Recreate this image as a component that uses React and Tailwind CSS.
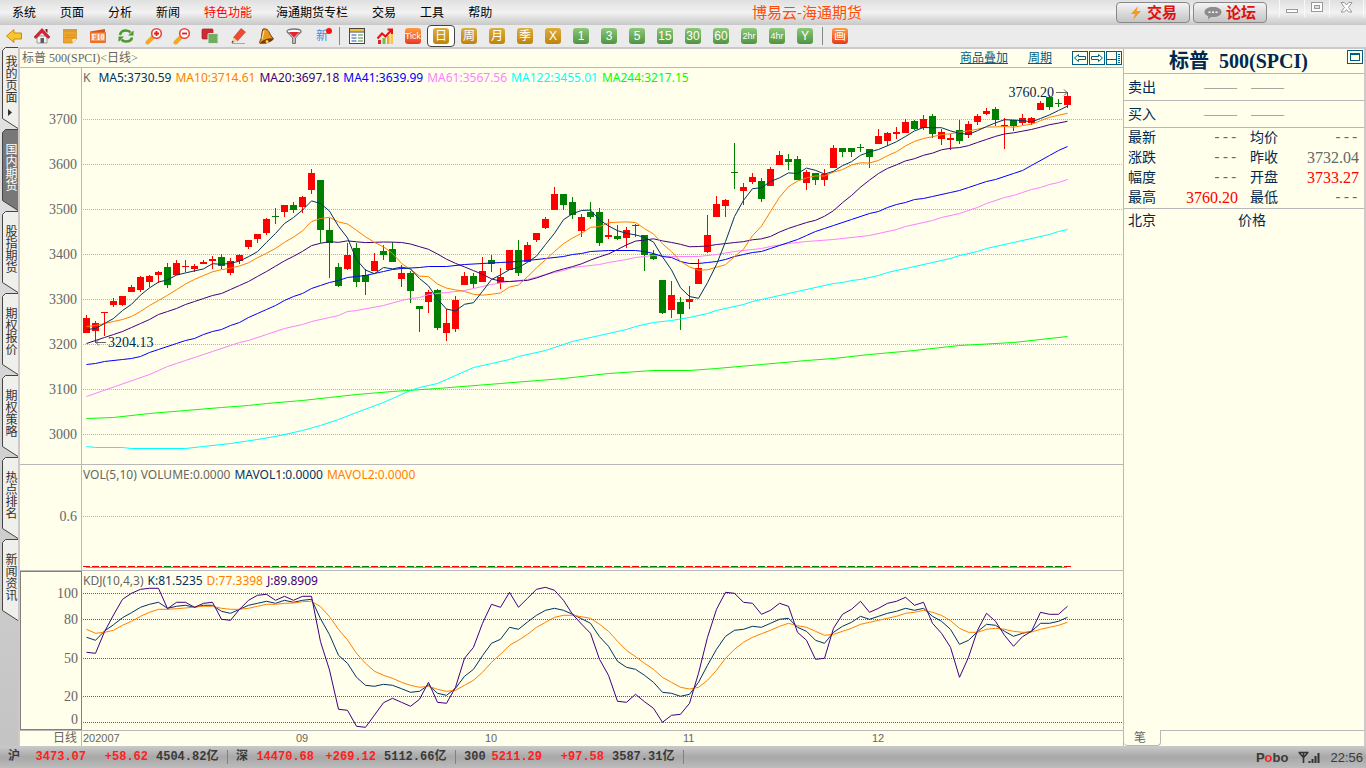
import React, { useState } from 'react';

const SONG = "font-['Liberation_Serif','Noto_Sans_CJK_SC',serif]";
const HEI = "font-['Liberation_Sans','Noto_Sans_CJK_SC',sans-serif]";
const MONO = "font-['Liberation_Mono','Noto_Sans_CJK_SC',monospace]";

const RED = '#ff0000';
const GREEN = '#008000';

const MENUS = ['系统', '页面', '分析', '新闻', '特色功能', '海通期货专栏', '交易', '工具', '帮助'];
const TABS = ['我的页面', '国内期货', '股指期货', '期权报价', '期权策略', '热点排名', '新闻资讯'];

// [high, body top, body bottom, low, up?]
const CANDLES = [
  [315, 318, 333, 333, 1], [321, 323, 331, 343, 1], [312, 312, 313, 336, 1], [298, 301, 305, 307, 1],
  [296, 296, 305, 306, 1], [285, 287, 292, 292, 1], [276, 277, 290, 292, 1], [275, 276, 282, 287, 1],
  [271, 272, 275, 283, 1], [263, 267, 285, 288, 0], [260, 263, 275, 275, 1], [260, 266, 267, 272, 1],
  [264, 266, 269, 272, 1], [260, 262, 264, 264, 1], [256, 259, 261, 269, 1], [254, 257, 266, 269, 0],
  [258, 261, 273, 275, 1], [254, 255, 261, 264, 1], [240, 240, 247, 249, 1], [234, 234, 239, 243, 1],
  [218, 219, 233, 235, 1], [208, 216, 217, 224, 0], [205, 205, 212, 217, 1], [202, 205, 210, 213, 0],
  [196, 197, 207, 213, 1], [169, 173, 190, 194, 1], [180, 180, 230, 243, 0], [218, 230, 243, 278, 0],
  [263, 267, 286, 287, 0], [243, 255, 269, 270, 1], [243, 248, 282, 287, 0], [269, 275, 282, 295, 0],
  [253, 261, 271, 271, 1], [245, 251, 255, 260, 0], [242, 249, 262, 262, 0], [265, 273, 279, 287, 1],
  [271, 273, 291, 303, 0], [306, 306, 309, 332, 0], [290, 292, 302, 313, 1], [289, 290, 328, 330, 0],
  [309, 323, 333, 341, 1], [296, 300, 329, 332, 1], [272, 276, 285, 285, 1], [273, 276, 284, 288, 0],
  [257, 271, 282, 282, 1], [255, 260, 264, 272, 0], [268, 277, 283, 289, 1], [250, 250, 270, 270, 1],
  [240, 250, 273, 276, 0], [242, 245, 262, 262, 1], [233, 233, 240, 242, 1], [217, 219, 228, 229, 1],
  [187, 194, 210, 210, 1], [194, 194, 205, 210, 0], [197, 202, 215, 219, 0], [214, 217, 231, 237, 1],
  [202, 212, 217, 219, 0], [208, 212, 243, 246, 0], [219, 235, 237, 239, 1], [225, 236, 239, 240, 0],
  [227, 230, 238, 248, 1], [224, 225, 226, 237, 1], [235, 235, 255, 271, 0], [250, 254, 259, 260, 0],
  [280, 280, 313, 314, 0], [281, 295, 310, 318, 1], [297, 302, 314, 330, 0], [286, 299, 302, 309, 1],
  [259, 268, 284, 284, 1], [215, 235, 252, 253, 1], [196, 204, 217, 217, 1], [199, 200, 206, 217, 1],
  [143, 172, 173, 189, 0], [183, 187, 191, 205, 1], [173, 177, 182, 184, 1], [178, 181, 199, 202, 0],
  [167, 169, 186, 186, 1], [151, 155, 165, 165, 1], [154, 159, 162, 170, 0], [156, 159, 180, 180, 0],
  [170, 172, 183, 190, 1], [173, 173, 180, 185, 0], [169, 174, 180, 186, 1], [145, 148, 168, 168, 1],
  [148, 148, 152, 157, 0], [148, 148, 152, 157, 0], [144, 147, 148, 152, 0], [149, 149, 157, 168, 0],
  [129, 136, 144, 144, 1], [132, 133, 141, 146, 1], [127, 132, 134, 139, 1], [119, 122, 133, 133, 1],
  [120, 121, 129, 130, 0], [115, 119, 128, 130, 1], [114, 116, 134, 138, 0], [129, 132, 139, 145, 1],
  [134, 138, 140, 150, 1], [120, 130, 141, 144, 0], [121, 124, 135, 138, 1], [114, 116, 122, 125, 1],
  [108, 111, 114, 115, 1], [107, 109, 120, 126, 0], [118, 125, 126, 149, 1], [120, 120, 126, 131, 0],
  [114, 118, 123, 125, 1], [117, 118, 123, 125, 1], [101, 103, 110, 110, 1], [95, 97, 107, 110, 0],
  [99, 103, 104, 107, 0], [92, 96, 105, 108, 1],
];

// values before the window is full
const MA5_HEAD = [329, 328, 323, 318];
const MA10_HEAD = [326, 325, 323, 321, 319, 316, 311, 305, 300];
const MA20_HEAD = [343, 340, 337, 334, 331, 327, 323, 319, 314, 311, 308, 304, 301, 298, 295, 293, 289, 285, 281];

// long averages: [bar, y]
const MA41 = [
  [0, 364], [1, 363], [2, 361], [4, 359], [5, 358], [6, 356], [7, 352], [8, 349], [10, 343], [11, 340], [12, 338],
  [13, 334], [14, 331], [15, 329], [16, 325], [17, 322], [18, 317], [19, 313], [20, 309], [21, 305], [22, 300],
  [23, 296], [24, 293], [25, 288], [26, 285], [27, 282], [28, 280], [29, 277], [30, 276], [31, 275], [32, 273],
  [33, 271], [34, 269], [35, 268], [37, 267], [38, 266], [40, 266], [42, 264], [44, 263], [46, 262], [48, 261],
  [49, 260], [51, 258], [53, 256], [54, 254], [55, 253], [56, 251], [58, 250], [61, 250], [62, 251], [63, 253],
  [64, 256], [65, 257], [66, 261], [67, 263], [68, 263], [69, 262], [70, 261], [71, 259], [72, 256], [73, 254],
  [74, 252], [75, 251], [76, 248], [77, 245], [78, 242], [79, 239], [80, 235], [81, 231], [82, 228], [83, 225],
  [85, 219], [87, 213], [88, 211], [89, 207], [90, 204], [91, 202], [92, 199], [93, 198], [94, 196], [96, 192],
  [97, 190], [98, 187], [99, 184], [100, 181], [101, 179], [103, 173], [104, 170], [105, 165], [107, 155],
  [108, 150], [109, 146],
];
const MA61 = [
  [0, 396], [7, 374], [8, 370], [9, 366], [10, 363], [11, 360], [12, 357], [13, 354], [14, 351], [16, 345], [17, 342],
  [18, 340], [20, 334], [22, 328], [24, 324], [25, 321], [27, 317], [28, 315], [29, 311], [30, 310], [33, 305],
  [35, 300], [36, 298], [37, 297], [38, 294], [40, 292], [42, 290], [43, 288], [45, 284], [47, 281], [49, 279],
  [51, 274], [52, 272], [53, 270], [54, 267], [55, 266], [57, 264], [58, 262], [60, 259], [61, 257], [63, 255],
  [65, 256], [68, 256], [70, 254], [72, 251], [74, 249], [75, 248], [76, 246], [78, 243], [80, 241], [83, 239],
  [87, 235], [90, 229], [91, 226], [94, 220], [95, 217], [97, 213], [98, 210], [99, 207], [100, 203], [102, 197],
  [103, 195], [104, 192], [105, 189], [106, 187], [107, 184], [108, 182], [109, 179],
];
const MA122 = [
  [0, 446], [1, 447], [4, 447], [5, 448], [11, 448], [13, 446], [16, 443], [19, 439], [21, 436], [24, 430], [26, 425],
  [28, 419], [30, 412], [33, 402], [34, 398], [36, 390], [37, 387], [39, 383], [40, 379], [41, 375], [43, 367],
  [45, 363], [47, 359], [48, 356], [51, 350], [52, 347], [54, 341], [57, 335], [60, 329], [61, 326], [63, 322],
  [65, 320], [67, 317], [69, 313], [70, 310], [73, 304], [74, 301], [75, 299], [79, 291], [83, 283], [84, 282],
  [85, 280], [86, 279], [88, 275], [89, 272], [96, 258], [97, 255], [99, 251], [100, 248], [103, 242], [107, 234],
  [108, 231], [109, 229],
];
const MA244 = [
  [0, 418], [3, 417], [7, 413], [11, 410], [15, 407], [18, 405], [20, 403], [24, 400], [27, 397], [30, 394], [34, 391],
  [39, 388], [46, 383], [53, 378], [58, 373], [63, 370], [67, 370], [70, 368], [75, 364], [80, 360], [83, 358],
  [87, 354], [92, 350], [97, 345], [103, 342], [109, 336],
];

// oscillator samples, three units to the pixel
const KDJ_K = [
  232, 241, 213, 194, 173, 158, 142, 133, 127, 145, 139, 136, 142, 136, 136, 154, 160, 148, 136, 130, 124, 130, 121,
  127, 121, 118, 176, 224, 286, 310, 352, 376, 379, 373, 376, 386, 397, 394, 375, 400, 406, 385, 349, 328, 287, 250,
  238, 202, 208, 186, 166, 151, 145, 151, 163, 176, 190, 230, 259, 304, 322, 328, 346, 367, 397, 400, 409, 403, 367,
  316, 268, 229, 211, 208, 199, 202, 190, 178, 175, 202, 214, 241, 250, 217, 199, 187, 169, 178, 169, 160, 154, 145,
  151, 145, 169, 184, 208, 253, 241, 215, 193, 196, 214, 229, 220, 214, 190, 190, 184, 172,
];
const KDJ_D = [
  208, 220, 217, 211, 196, 184, 169, 157, 148, 148, 146, 144, 141, 139, 139, 145, 148, 148, 145, 139, 133, 133, 130,
  129, 125, 124, 140, 170, 208, 240, 280, 310, 334, 346, 355, 367, 376, 382, 379, 388, 394, 391, 376, 361, 337, 307,
  283, 256, 241, 223, 202, 187, 172, 166, 166, 170, 175, 193, 214, 244, 271, 290, 310, 328, 352, 367, 382, 387, 382,
  361, 331, 295, 268, 247, 232, 221, 211, 199, 190, 197, 202, 214, 226, 223, 214, 205, 193, 187, 181, 175, 169, 160,
  157, 151, 157, 166, 182, 205, 217, 217, 208, 205, 208, 214, 217, 216, 208, 202, 196, 187,
];
const KDJ_J = [
  277, 280, 215, 165, 118, 100, 88, 85, 85, 146, 127, 127, 142, 130, 127, 178, 181, 148, 121, 106, 103, 121, 109, 121,
  109, 109, 245, 330, 448, 451, 499, 502, 465, 428, 415, 427, 439, 418, 367, 427, 430, 382, 295, 262, 190, 133, 142,
  97, 142, 115, 88, 82, 91, 121, 163, 192, 220, 298, 346, 424, 427, 403, 425, 445, 487, 466, 463, 430, 340, 232, 148,
  97, 100, 127, 130, 163, 151, 130, 139, 217, 241, 298, 295, 205, 163, 148, 124, 157, 145, 130, 124, 112, 136, 127,
  190, 220, 262, 352, 292, 211, 160, 184, 226, 259, 230, 214, 157, 163, 163, 139,
];

const PRICE_TOP = 68;
const KDJ_TOP = 11;
const STEP = 9;

const barX = (i) => 4 + i * STEP;

const closes = CANDLES.map(([, top, bottom, , up]) => (up ? top : bottom));

const movingAverage = (days, head) =>
  closes.map((_, i) => {
    if (i < head.length) return head[i];
    const slice = closes.slice(i - days + 1, i + 1);
    return slice.reduce((sum, v) => sum + v, 0) / days;
  });

const seriesPoints = (ys) => ys.map((y, i) => `${barX(i) + 0.5},${y - PRICE_TOP + 0.5}`).join(' ');
const sparsePoints = (pairs) => pairs.map(([i, y]) => `${barX(i) + 0.5},${y - PRICE_TOP + 0.5}`).join(' ');
const kdjPoints = (vs) => vs.map((v, i) => `${barX(i) + 0.5},${(v / 3 - KDJ_TOP).toFixed(1)}`).join(' ');

const PRICE_LINES = [
  { color: '#00ff00', points: sparsePoints(MA244) },
  { color: '#00ffff', points: sparsePoints(MA122) },
  { color: '#ff80ff', points: sparsePoints(MA61) },
  { color: '#0000ff', points: sparsePoints(MA41) },
  { color: '#400080', points: seriesPoints(movingAverage(20, MA20_HEAD)) },
  { color: '#ff8000', points: seriesPoints(movingAverage(10, MA10_HEAD)) },
  { color: '#003366', points: seriesPoints(movingAverage(5, MA5_HEAD)) },
];

function Legend({ items }) {
  return (
    <div className="absolute left-px top-0.5 flex gap-1 whitespace-nowrap font-['Noto_Sans',sans-serif] text-[12px] leading-4">
      {items.map(([text, color]) => (
        <span key={text} className={color}>{text}</span>
      ))}
    </div>
  );
}

function Axis({ labels }) {
  return (
    <svg className="h-full w-full" aria-hidden="true">
      {labels.map(([text, y]) => (
        <text key={text} x="57" y={y + 5} textAnchor="end" fontSize="14" fill="#666" fontFamily="Liberation Serif, serif">{text}</text>
      ))}
    </svg>
  );
}

function Grid({ rows, color }) {
  return rows.map((y) => (
    <line key={y} x1="1" x2="100%" y1={y + 0.5} y2={y + 0.5} stroke={color} strokeDasharray="1 1" />
  ));
}

function ChartRow({ className, axis, axisClass = '', children }) {
  return (
    <div className={`grid grid-cols-[62px_minmax(0,1fr)] border-b border-[#b8b8b8] ${className}`}>
      <div className={axisClass || 'border-r border-[#b8b8b8]'}>{axis}</div>
      <div className="relative overflow-hidden">{children}</div>
    </div>
  );
}

function PriceChart() {
  const levels = [3700, 3600, 3500, 3400, 3300, 3200, 3100, 3000];
  return (
    <ChartRow
      className="min-h-[397px] flex-1"
      axis={<Axis labels={levels.map((v, i) => [String(v), 51 + i * 45])} />}
    >
      <svg className="absolute inset-0 h-full w-full" role="img" aria-label="日线">
        <Grid rows={levels.map((_, i) => 51 + i * 45)} color="#b4b4ac" />
        {CANDLES.map(([high, top, bottom, low, up], i) => (
          <g key={i} fill={up ? RED : GREEN} shapeRendering="crispEdges">
            <rect x={barX(i)} y={high - PRICE_TOP} width="1" height={low - high} />
            <rect x={barX(i) - 3} y={top - PRICE_TOP} width="7" height={bottom - top} />
          </g>
        ))}
        {PRICE_LINES.map((line) => (
          <polyline key={line.color} points={line.points} fill="none" stroke={line.color} />
        ))}
        <g stroke="#666" fill="none">
          <path d="M14 274.500h10M17 271.500l-3 3 3 3M974 24.500h11M982 21.500l3 3-3 3" />
        </g>
        <g fontFamily="Liberation Serif, serif" fontSize="14" fill="#002850">
          <text x="26" y="279">3204.13</text>
          <text x="972" y="29" textAnchor="end">3760.20</text>
        </g>
      </svg>
      <Legend
        items={[
          ['K', 'mr-1 text-[#666]'],
          ['MA5:3730.59', 'text-[#003366]'],
          ['MA10:3714.61', 'text-[#ff8000]'],
          ['MA20:3697.18', 'text-[#400080]'],
          ['MA41:3639.99', 'text-[#0000ff]'],
          ['MA61:3567.56', 'text-[#ff80ff]'],
          ['MA122:3455.01', 'text-[#00ffff]'],
          ['MA244:3217.15', 'text-[#00ff00]'],
        ]}
      />
    </ChartRow>
  );
}

function VolumeChart() {
  return (
    <ChartRow className="h-[106px]" axis={<Axis labels={[['0.6', 51]]} />}>
      <svg className="absolute inset-0 h-full w-full" role="img" aria-label="VOL">
        <Grid rows={[51]} color="#b4b4ac" />
        <g shapeRendering="crispEdges">
          <rect x="4" y="102" width={STEP * (CANDLES.length - 1)} height="1" fill="#ff8000" />
          {CANDLES.map((c, i) => (
            <rect key={i} x={barX(i) - 3} y="101" width="7" height="1" fill={c[4] ? RED : GREEN} />
          ))}
        </g>
      </svg>
      <Legend
        items={[
          ['VOL(5,10)', 'text-[#666]'],
          ['VOLUME:0.0000', 'text-[#666]'],
          ['MAVOL1:0.0000', 'text-[#003366]'],
          ['MAVOL2:0.0000', 'text-[#ff8000]'],
        ]}
      />
    </ChartRow>
  );
}

function KdjChart() {
  return (
    <ChartRow
      className="h-[160px]"
      axisClass="border border-[#808080]"
      axis={<Axis labels={[['100', 21], ['80', 47], ['50', 86], ['20', 124], ['0', 147]]} />}
    >
      <svg className="absolute inset-0 h-full w-full" role="img" aria-label="KDJ">
        <Grid rows={[22, 48, 87, 125, 151]} color="#606060" />
        <g fill="none">
          <polyline points={kdjPoints(KDJ_K)} stroke="#003366" />
          <polyline points={kdjPoints(KDJ_D)} stroke="#ff8000" />
          <polyline points={kdjPoints(KDJ_J)} stroke="#400080" />
        </g>
      </svg>
      <Legend
        items={[
          ['KDJ(10,4,3)', 'text-[#666]'],
          ['K:81.5235', 'text-[#003366]'],
          ['D:77.3398', 'text-[#ff8000]'],
          ['J:89.8909', 'text-[#400080]'],
        ]}
      />
    </ChartRow>
  );
}

const Icon = ({ children, size = 18 }) => (
  <svg width={size} height={size} viewBox="0 0 18 18" aria-hidden="true">{children}</svg>
);

const Magnifier = ({ plus }) => (
  <Icon>
    <path d="M2.500 15.500l5-5" stroke="#f7a81b" strokeWidth="4" strokeLinecap="round" />
    <circle cx="11.500" cy="6.500" r="4.800" fill="#fff" stroke="#e8453a" strokeWidth="1.600" />
    <path d={plus ? 'M9 6.500h5M11.500 4v5' : 'M9 6.500h5'} stroke="#e02010" strokeWidth="1.800" />
  </Icon>
);

const LEFT_TOOLS = [
  ['后退', <Icon><path d="M1.500 9L9 2.500V6h7.500v6H9v3.500z" fill="#f9c62c" stroke="#c98a10" strokeLinejoin="round" /></Icon>],
  ['首页', (
    <Icon>
      <path d="M4 9h10v7H4z" fill="#f2f2f2" stroke="#999" />
      <path d="M1 10L9 1.500l8 8.500-2 1.500-6-6-6 6z" fill="#d92231" stroke="#a3121f" strokeWidth=".6" />
      <path d="M12.500 2h2v4l-2-2z" fill="#a3121f" />
      <path d="M7.500 11h3.500v5H7.500z" fill="#5b5b5b" />
    </Icon>
  )],
  ['便签', (
    <Icon>
      <path d="M2.500 2.500h13v9.500l-4 4h-9z" fill="#eea32c" stroke="#c98a2a" strokeWidth=".7" />
      <path d="M2 2h14v3H2z" fill="#d99a38" />
      <path d="M4 8h10M4 10.500h10" stroke="#d08f22" strokeWidth=".8" />
      <path d="M11.500 16v-4h4z" fill="#fff3cf" />
    </Icon>
  )],
  ['F10', (
    <Icon>
      <path d="M1 4.500l15-2.500v4H1z" fill="#d05a1c" />
      <rect x="1" y="5" width="16" height="11" rx="1" fill="#ee6f2a" />
      <rect x="2" y="6" width="14" height="8" fill="#f39a5c" />
      <text x="9" y="13" textAnchor="middle" fontSize="8" fontWeight="bold" fill="#fff" fontFamily="Liberation Serif, serif">F10</text>
    </Icon>
  )],
  ['刷新', (
    <Icon>
      <path d="M3 8c.5-3 3-4.500 6-4.500 2 0 3.500.7 4.500 2" fill="none" stroke="#4c9a2a" strokeWidth="2.600" />
      <path d="M16.500 3.500V8.500h-5.500z" fill="#4c9a2a" />
      <path d="M15 10.500c-.5 3-3 4-6 4-2 0-3.500-.7-4.500-2" fill="none" stroke="#4c9a2a" strokeWidth="2.600" />
      <path d="M1.500 15V9.500H7z" fill="#4c9a2a" />
    </Icon>
  )],
  ['放大', <Magnifier plus />],
  ['缩小', <Magnifier />],
  ['叠加', (
    <Icon>
      <rect x="1" y="2" width="11" height="10" rx="1" fill="#cf2b35" stroke="#9c1c25" strokeWidth=".7" />
      <rect x="7" y="6.500" width="10" height="10" rx="1" fill="#6fae62" stroke="#d9ead5" />
    </Icon>
  )],
  ['画笔', (
    <Icon>
      <path d="M3 16.500h13" stroke="#e88" />
      <path d="M4.500 10.500l7.500-9 4.500 3.500-8 9z" fill="#ee4a33" stroke="#b82d1a" strokeWidth=".5" />
      <path d="M4.500 10.500l4 3.500-6 2z" fill="#f6cf8d" />
      <path d="M2.500 16l.8-2.200 1.700 1.300z" fill="#333" />
    </Icon>
  )],
  ['预警', (
    <Icon>
      <path d="M6 2c5-1 6 3 7.500 6l3 4L3 16.500C2 15.500 3 14 4 12c1-3 .5-7 2-10z" fill="#e9981f" stroke="#7a3a06" />
      <ellipse cx="10" cy="14" rx="6.500" ry="2" transform="rotate(-18 10 14)" fill="#7a3a06" />
      <circle cx="10" cy="14.500" r="1.500" fill="#ffd257" />
      <path d="M7 4c-1 3-1 5-2 8" stroke="#ffe29b" strokeWidth="1.200" fill="none" />
    </Icon>
  )],
  ['筛选', (
    <Icon>
      <ellipse cx="9" cy="4.500" rx="7" ry="2.500" fill="#fff" stroke="#777" strokeWidth="1.300" />
      <path d="M2 5l5.500 6v5.500h3V11L16 5c-2 2-12 2-14 0z" fill="#b9b9b9" stroke="#777" />
      <path d="M4 5h10l-5 5.500z" fill="#e9212c" />
    </Icon>
  )],
];

const PERIODS = [
  ['日', 'gold'], ['周', 'gold'], ['月', 'gold'], ['季', 'gold'], ['X', 'gold'],
  ['1', 'green'], ['3', 'green'], ['5', 'green'], ['15', 'green'], ['30', 'green'], ['60', 'green'],
  ['2hr', 'green'], ['4hr', 'green'], ['Y', 'green'],
];

const TILE = {
  gold: 'bg-linear-to-b from-[#dcae3c] to-[#c08400]',
  green: 'bg-linear-to-b from-[#8cc878] to-[#4f9440]',
  orange: 'bg-linear-to-b from-[#ff9a3c] to-[#e83420]',
};

function Tile({ tone, children }) {
  const long = children.length > 2;
  return (
    <span className={`flex h-4 w-4 items-center justify-center rounded-[3px] leading-none text-white ${TILE[tone]} ${long ? 'text-[9px]' : 'text-[12px]'}`}>
      {children}
    </span>
  );
}

function ToolButton({ label, active, onClick, children }) {
  return (
    <button
      type="button"
      aria-label={label}
      onClick={onClick}
      className={`flex h-[22px] w-7 shrink-0 items-center justify-center ${active ? 'rounded-sm border border-[#444] bg-white' : ''}`}
    >
      {children}
    </button>
  );
}

const Separator = () => <span className="mx-[3px] h-[18px] w-px shrink-0 bg-[#888]" />;

function Toolbar() {
  const [period, setPeriod] = useState('日');
  return (
    <div className={`flex h-[22px] items-center overflow-hidden bg-[#ebebeb] ${HEI}`}>
      {LEFT_TOOLS.map(([label, icon]) => (
        <ToolButton key={label} label={label}>{icon}</ToolButton>
      ))}
      <ToolButton label="新">
        <span className="relative text-[12px] leading-none text-[#3b8ee0]">
          新
          <span className="absolute -right-1 -top-0.5 h-1.5 w-1.5 rounded-full bg-[#ff1010]" />
        </span>
      </ToolButton>
      <Separator />
      <ToolButton label="报价">
        <Icon>
          <rect x="1.500" y="1.500" width="15" height="15" fill="#fff" stroke="#444" />
          <path d="M2 2h14v2.500H2z" fill="#f1c232" />
          <path d="M2 5h14" stroke="#444" />
          <path d="M3.500 8h5M3.500 11h5M3.500 14h5" stroke="#2b4fa8" strokeWidth="1.200" />
          <path d="M10 8h5M10 11h5M10 14h5" stroke="#3b8f2e" strokeWidth="1.200" />
        </Icon>
      </ToolButton>
      <ToolButton label="分时">
        <Icon>
          <path d="M2 13h3v4H2z" fill="#d6281e" />
          <path d="M6.500 11h3v6h-3z" fill="#7ab648" />
          <path d="M11 9h2.500v8H11z" fill="#f1a52c" />
          <path d="M14.500 6H17v11h-2.500z" fill="#f6c846" />
          <path d="M1.500 11.500L6 6.500l3.500 3 6-6.500M11.500 2.500h4.500V7" fill="none" stroke="#e3150f" strokeWidth="2" />
        </Icon>
      </ToolButton>
      <ToolButton label="Tick"><Tile tone="orange">Tick</Tile></ToolButton>
      {PERIODS.map(([text, tone]) => (
        <ToolButton key={text} label={text} active={period === text} onClick={() => setPeriod(text)}>
          <Tile tone={tone}>{text}</Tile>
        </ToolButton>
      ))}
      <Separator />
      <ToolButton label="画线"><Tile tone="orange">画</Tile></ToolButton>
    </div>
  );
}

function MenuBar() {
  return (
    <header className={`flex h-[25px] items-center bg-linear-to-b from-[#e0e0e0] via-[#f2f2f2] to-[#c8c8c8] ${HEI}`}>
      <nav className="flex shrink-0">
        {MENUS.map((name) => (
          <button key={name} type="button" className={`px-3 text-[12px] leading-6 ${name === '特色功能' ? 'text-[#ff0000]' : 'text-black'}`}>
            {name}
          </button>
        ))}
      </nav>
      <h1 className="flex-1 whitespace-nowrap pr-1.5 text-center text-[15px] leading-6 text-[#ff4c0a]">博易云-海通期货</h1>
      <div className="flex shrink-0 items-start gap-[3px]">
        <button type="button" className="flex h-[21px] w-[74px] items-center justify-center gap-1 rounded border border-[#888] bg-linear-to-b from-[#f4f4f4] to-[#c4c4c4] text-[15px] leading-none text-[#e01010]">
          <svg width="14" height="16" viewBox="0 0 14 16" aria-hidden="true">
            <path d="M9 1L2 9h4l-2 6 8-9H7.500z" fill="#f79a1c" />
          </svg>
          <b>交易</b>
        </button>
        <button type="button" className="flex h-[21px] w-[74px] items-center justify-center gap-1 rounded border border-[#888] bg-linear-to-b from-[#f4f4f4] to-[#c4c4c4] text-[15px] leading-none text-[#e01010]">
          <svg width="18" height="14" viewBox="0 0 18 14" aria-hidden="true">
            <path d="M9 1c5 0 8.500 2 8.500 5s-3.500 5-8.500 5c-.7 0-1.300 0-2 .1L4 13.500l.3-3.200C2 9.500.5 8 .5 6 .5 3 4 1 9 1z" fill="#8c8c8c" />
            <path d="M4.500 5.500h2v1.500h-2zM8 5.500h2v1.500H8zM11.500 5.500h2v1.500h-2z" fill="#fff" />
          </svg>
          <b>论坛</b>
        </button>
      </div>
      <div className="ml-3 mr-0.5 flex h-[17px] shrink-0 self-start divide-x divide-[#f8f8f8] border-x border-[#f8f8f8]">
        <button type="button" aria-label="最小化" className="flex w-[25px] items-center justify-center">
          <svg width="13" height="14" aria-hidden="true"><rect x=".5" y="7.500" width="11" height="3" fill="#fff" stroke="#999" /></svg>
        </button>
        <button type="button" aria-label="最大化" className="flex w-[25px] items-center justify-center">
          <svg width="13" height="14" aria-hidden="true">
            <rect x=".5" y=".5" width="11" height="9" fill="#fff" stroke="#999" />
            <rect x="3.500" y="3.500" width="5" height="3" fill="#ddd" stroke="#999" />
          </svg>
        </button>
        <button type="button" aria-label="关闭" className="flex w-[33px] items-center justify-center">
          <svg width="13" height="14" viewBox="0 0 13 14" aria-hidden="true">
            <path d="M1 .5h3.500L6.500 3l2-2.500H12L8.500 5.500l3.500 4.500H8.500l-2-2.500-2 2.500H1L4.500 5.500z" fill="#fff" stroke="#999" />
          </svg>
        </button>
      </div>
    </header>
  );
}

function SideTabs() {
  const [current, setCurrent] = useState('国内期货');
  return (
    <aside className={`w-[18px] shrink-0 bg-linear-to-b from-[#e4e4e4] to-[#c4c4c4] ${HEI}`}>
      {TABS.map((name, i) => {
        const active = current === name;
        return (
          <button
            key={name}
            type="button"
            onClick={() => setCurrent(name)}
            className={`relative flex h-[82px] w-full flex-col items-center justify-center gap-1.5 pb-1.5 pl-0.5 ${active ? 'text-white' : 'text-[#333]'}`}
          >
            <svg className="absolute inset-0" width="18" height="82" aria-hidden="true">
              <path d="M18 .5H5.500l-3 3V71.500L18 81.500z" fill={active ? '#787878' : '#efefec'} />
              <path d="M18 .5H5.500l-3 3V71.500L18 81.500" fill="none" stroke="#444" />
            </svg>
            <span className="relative text-[12px] leading-3 [writing-mode:vertical-rl]">{name}</span>
            {i === 0 && (
              <svg className="relative" width="4" height="7" aria-hidden="true"><path d="M0 0l4 3.500L0 7z" fill="#333" /></svg>
            )}
          </button>
        );
      })}
    </aside>
  );
}

function ChartHeader() {
  return (
    <div className={`flex h-[19px] items-center border-b border-[#b8b8b8] pl-0.5 text-[12px] leading-4 ${SONG}`}>
      <h2 className="flex-1 text-[#666]">标普 500(SPCI)&lt;日线&gt;</h2>
      <a href="#overlay" className="mr-5 text-[#005f87] underline">商品叠加</a>
      <a href="#period" className="mr-5 text-[#005f87] underline">周期</a>
      <div className="flex text-[#005f87]">
        <button type="button" aria-label="向左">
          <svg width="17" height="15" fill="none" stroke="currentColor" aria-hidden="true">
            <rect x=".5" y=".5" width="15" height="13" />
            <path d="M2.500 7L6.500 3.500v2h7v3h-7v2z" />
          </svg>
        </button>
        <button type="button" aria-label="向右">
          <svg width="17" height="15" fill="none" stroke="currentColor" aria-hidden="true">
            <rect x=".5" y=".5" width="15" height="13" />
            <path d="M13.500 7L9.500 3.500v2h-7v3h7v2z" />
          </svg>
        </button>
        <button type="button" aria-label="布局">
          <svg width="17" height="15" fill="none" stroke="currentColor" aria-hidden="true">
            <rect x=".5" y=".5" width="15" height="13" />
            <path d="M10.500 0v14M0 8.500h10M12 3.500h2M12 5.500h2M12 7.500h2M12 9.500h2M12 11.500h2" />
          </svg>
        </button>
      </div>
    </div>
  );
}

const DASH = "font-['Liberation_Mono',monospace] text-[14px] text-[#666]";

const QUOTE_ROWS = [
  ['最新', '---', DASH, '均价', '---', DASH],
  ['涨跌', '---', DASH, '昨收', '3732.04', 'text-[16px] text-[#666]'],
  ['幅度', '---', DASH, '开盘', '3733.27', 'text-[16px] text-[#ff0000]'],
  ['最高', '3760.20', 'text-[16px] text-[#ff0000]', '最低', '---', DASH],
];

function QuotePanel() {
  return (
    <section className={`flex w-[241px] shrink-0 flex-col border-l border-[#b8b8b8] text-[#002850] ${SONG}`}>
      <div className="flex h-[25px] items-center border-b border-[#b8b8b8] pl-[45px] pr-px">
        <h2 className="flex flex-1 gap-2.5 whitespace-nowrap text-[20px] font-bold leading-6">
          <span>标普</span>
          <span>500(SPCI)</span>
        </h2>
        <button type="button" aria-label="还原" className="self-start pt-px text-[#005f87]">
          <svg width="16" height="14" fill="none" stroke="currentColor" aria-hidden="true">
            <rect x=".5" y=".5" width="15" height="13" />
            <rect x="3.500" y="3.500" width="9" height="7" />
            <path d="M3 4.500h10" />
          </svg>
        </button>
      </div>
      {['卖出', '买入'].map((side) => (
        <div key={side} className="flex h-[27px] items-center border-b border-[#b8b8b8] pl-1 text-[14px]">
          <span className="w-[76px]">{side}</span>
          <span className="text-[11px] text-[#666]">———</span>
          <span className="ml-3.5 text-[11px] text-[#666]">———</span>
        </div>
      ))}
      <div className="border-b border-[#b8b8b8]">
        <table className="w-full table-fixed text-[14px]">
          <tbody>
            {QUOTE_ROWS.map(([a, av, ac, b, bv, bc]) => (
              <tr key={a} className="h-5">
                <th scope="row" className="w-9 p-0 pl-1 text-left align-middle font-normal leading-4">{a}</th>
                <td className={`w-[78px] p-0 text-right align-middle leading-4 ${ac}`}>{av}</td>
                <th scope="row" className="w-[50px] p-0 pl-3 text-left align-middle font-normal leading-4">{b}</th>
                <td className={`p-0 pr-[5px] text-right align-middle leading-4 ${bc}`}>{bv}</td>
              </tr>
            ))}
          </tbody>
        </table>
      </div>
      <div className="flex flex-1 pl-1 pt-0.5 text-[14px] leading-5">
        <span className="w-[110px]">北京</span>
        <span>价格</span>
      </div>
      <div className="flex h-4">
        <button type="button" className="h-4 w-[37px] rounded-b border-b border-r border-[#b8b8b8] pr-1 text-[12px] leading-4 text-[#666]">笔</button>
        <span className="flex-1 border-t border-[#b8b8b8]" />
      </div>
    </section>
  );
}

function TimeAxis() {
  return (
    <div className="grid h-[15px] grid-cols-[62px_minmax(0,1fr)] text-[#666]">
      <div className={`border-r border-[#b8b8b8] pr-1 text-right text-[12px] leading-[15px] ${SONG}`}>日线</div>
      <svg className="h-[15px] w-full" aria-hidden="true">
        <g fontFamily="Liberation Sans, sans-serif" fontSize="11" fill="#666">
          <text x="1" y="11">202007</text>
          <text x="214" y="11">09</text>
          <text x="403" y="11">10</text>
          <text x="601" y="11">11</text>
          <text x="790" y="11">12</text>
        </g>
      </svg>
    </div>
  );
}

const INDEXES = [
  ['沪', '3473.07', '+58.62', '4504.82亿'],
  ['深', '14470.68', '+269.12', '5112.66亿'],
  ['300', '5211.29', '+97.58', '3587.31亿'],
];

function StatusBar() {
  return (
    <footer className="flex h-[22px] items-center bg-linear-to-b from-[#cacaca] via-[#a8a8a8] to-[#bcbcbc] text-[#3a3a3a]">
      {INDEXES.map(([name, price, change, amount]) => (
        <div key={name} className={`flex h-3.5 w-[228px] items-center whitespace-nowrap border-r border-[#808080] text-[12px] font-bold leading-[14px] ${MONO}`}>
          <span className="flex w-[86px] justify-between pl-2">
            <span>{name}</span>
            <span className="text-[#ff2020]">{price}</span>
          </span>
          <span className="w-[62px] text-right text-[#ff2020]">{change}</span>
          <span className="pl-2">{amount}</span>
        </div>
      ))}
      <div className="ml-auto flex items-center gap-2.5 pr-[3px] font-['Liberation_Sans',sans-serif] text-[13px] leading-none">
        <b>P<span className="text-[#ff2020]">o</span>bo</b>
        <svg width="22" height="13" viewBox="0 0 22 13" fill="none" stroke="#333" aria-hidden="true">
          <path d="M.5 1.500h10M1.500 2l4 4.500 4-4.500M5.500 1v11" strokeWidth="1.600" />
          <path d="M11.500 10v2M14.500 8v4M17.500 5v7M20.500 2v10" strokeWidth="2" />
        </svg>
        <time>22:56</time>
      </div>
    </footer>
  );
}

export default function App() {
  return (
    <div className="flex min-h-screen flex-col bg-[#d0c8c8]">
      <MenuBar />
      <Toolbar />
      <main className="flex flex-1">
        <SideTabs />
        <div className="flex min-w-0 flex-1 border-l-2 border-r-2 border-t-2 border-[#d0c8c8] bg-[#ffffec]">
          <section className="flex min-w-0 flex-1 flex-col">
            <ChartHeader />
            <PriceChart />
            <VolumeChart />
            <KdjChart />
            <TimeAxis />
          </section>
          <QuotePanel />
        </div>
      </main>
      <StatusBar />
    </div>
  );
}
